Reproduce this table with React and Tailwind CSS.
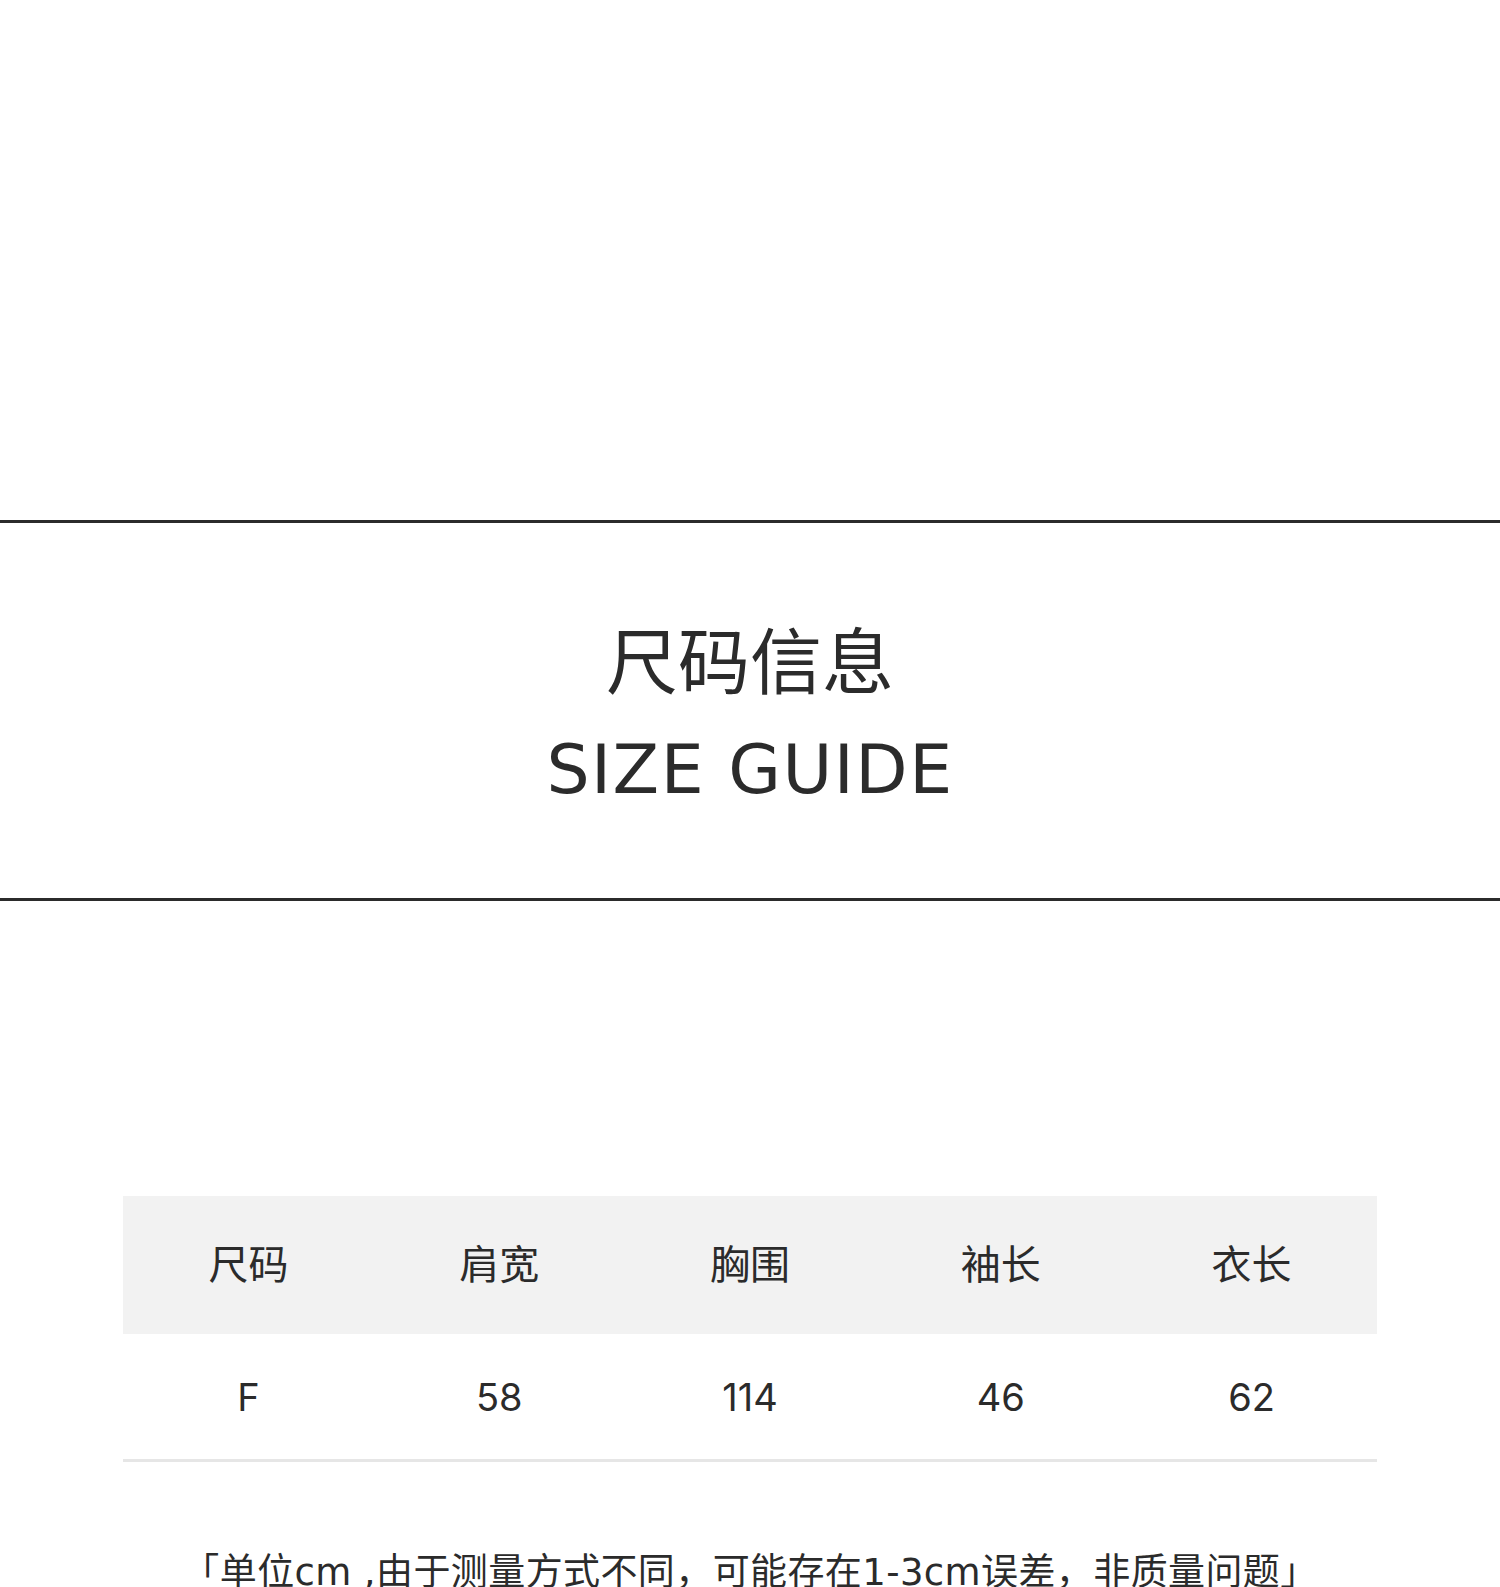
export default function App() {
  const heads = ["尺码", "肩宽", "胸围", "袖长", "衣长"];
  const vals = ["F", "58", "114", "46", "62"];
  return (
    <div
      className="w-full bg-white text-[#2b2b2b]"
      style={{ fontFamily: '"DejaVu Sans", "Noto Sans CJK SC", sans-serif' }}
    >
      <div className="h-[520px]" />
      <div className="h-[3px] bg-[#2b2b2b]" />
      <div className="h-[375px] flex flex-col items-center pt-[98px]">
        <div className="text-[72px] leading-none" style={{ fontFamily: '"Noto Sans CJK SC", sans-serif' }}>
          尺码信息
        </div>
        <div className="mt-[43px] text-[68px] leading-none tracking-[1.5px]">SIZE GUIDE</div>
      </div>
      <div className="h-[3px] bg-[#2b2b2b]" />
      <div className="h-[295px]" />
      <div className="w-[1254px] mx-auto">
        <div className="grid grid-cols-5 h-[138px] bg-[#f2f2f2] items-center pb-[6px]">
          {heads.map((h) => (
            <div
              key={h}
              className="text-center text-[40px] leading-none"
              style={{ fontFamily: '"Noto Sans CJK SC", sans-serif' }}
            >
              {h}
            </div>
          ))}
        </div>
        <div className="grid grid-cols-5 h-[125px] items-center">
          {vals.map((v) => (
            <div
              key={v}
              className="text-center text-[38px] leading-none"
              style={{ fontFamily: 'Inter, "DejaVu Sans", sans-serif' }}
            >
              {v}
            </div>
          ))}
        </div>
        <div className="h-[3px] bg-[#e6e6e6]" />
      </div>
      <div className="pt-[92px] pb-[40px] text-center text-[37px] leading-none tracking-[0.4px] whitespace-nowrap">
        「单位cm ,由于测量方式不同，可能存在1-3cm误差，非质量问题」
      </div>
    </div>
  );
}
